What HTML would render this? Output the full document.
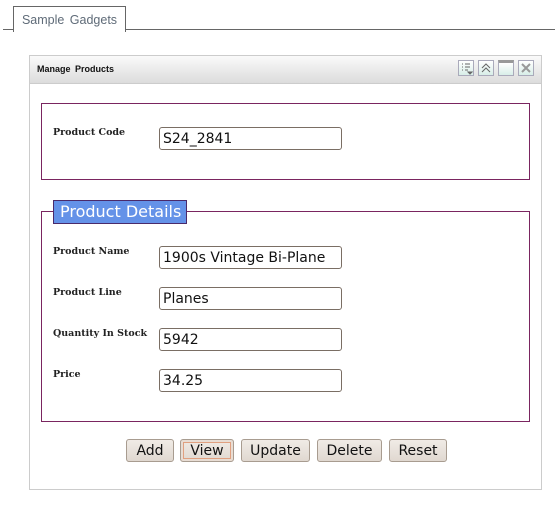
<!DOCTYPE html>
<html><head><style>
body{margin:0;width:555px;height:527px;background:#fff;position:relative;overflow:hidden;font-family:"Liberation Sans",sans-serif}
.a{position:absolute}
.lbl{position:absolute;left:53px;font-family:"DejaVu Serif",serif;font-weight:bold;font-size:9.5px;color:#222}
.inp{position:absolute;left:159px;border:1px solid #7a6e64;border-radius:3px;box-sizing:border-box;width:183px;height:23px;font-family:"DejaVu Sans",sans-serif;font-size:14px;color:#111;padding:3px 0 0 3px;line-height:17px}
.btn{position:absolute;top:439px;height:23px;box-sizing:border-box;border:1px solid #a89c90;border-radius:3px;background:linear-gradient(#f0ebe6,#e0d8d0);font-family:"DejaVu Sans",sans-serif;font-size:14px;color:#111;text-align:center;line-height:23px}
.ic{position:absolute;top:60px;width:16px;height:16px;box-sizing:border-box;border:1px solid #aab;background:linear-gradient(#fff,#d8eee8)}
.fs{position:absolute;box-sizing:border-box;border:1px solid #7a2560}
</style></head><body>
<div class="a" style="left:3px;top:29px;width:552px;height:1px;background:#666"></div>
<div class="a" style="left:13px;top:6px;width:113px;height:26px;box-sizing:border-box;border:1px solid #666;border-bottom:none;background:#fff;color:#5f6b78;font-size:12.5px;line-height:27px;text-align:center;word-spacing:2px">Sample Gadgets</div>

<div class="a" style="left:29px;top:55px;width:513px;height:435px;box-sizing:border-box;border:1px solid #ccc"></div>
<div class="a" style="left:30px;top:56px;width:511px;height:27px;background:linear-gradient(#fafafa,#dcdcdc);border-bottom:1px solid #ccc"></div>
<div class="a" style="left:37px;top:64px;font-size:9px;font-weight:bold;color:#111;word-spacing:2px">Manage Products</div>
<div class="ic" style="left:458px"><svg width="14" height="14"><path d="M3 3h1M3 6h1M3 9h1M6 3h5M6 6h5M6 9h3M9 11l2 2 2-2z" stroke="#666" fill="#666"/></svg></div>
<div class="ic" style="left:478px"><svg width="14" height="14"><path d="M3 7l4-4 4 4M3 11l4-4 4 4" stroke="#666" fill="none"/></svg></div>
<div class="ic" style="left:498px;border-top:3px solid #999"></div>
<div class="ic" style="left:518px"><svg width="14" height="14"><path d="M3 3l8 8M11 3l-8 8" stroke="#999" stroke-width="2"/></svg></div>

<div class="fs" style="left:41px;top:103px;width:489px;height:77px"></div>
<div class="lbl" style="top:127px">Product Code</div>
<div class="inp" style="top:127px">S24_2841</div>

<div class="fs" style="left:41px;top:211px;width:489px;height:211px"></div>
<div class="a" style="left:53px;top:200px;width:134px;height:24px;box-sizing:border-box;border:1px solid #4a2a6a;background:#6492e8;color:#fff;font-family:'DejaVu Sans',sans-serif;font-size:16px;line-height:22px;padding-left:6px">Product Details</div>
<div class="lbl" style="top:246px">Product Name</div>
<div class="inp" style="top:246px">1900s Vintage Bi-Plane</div>
<div class="lbl" style="top:287px">Product Line</div>
<div class="inp" style="top:287px">Planes</div>
<div class="lbl" style="top:328px">Quantity In Stock</div>
<div class="inp" style="top:328px">5942</div>
<div class="lbl" style="top:369px">Price</div>
<div class="inp" style="top:369px">34.25</div>

<div class="btn" style="left:126px;width:48px">Add</div>
<div class="btn" style="left:180px;width:54px;box-shadow:inset 0 0 0 2px #e8ddd4,inset 0 0 0 3px #e0a080">View</div>
<div class="btn" style="left:241px;width:69px">Update</div>
<div class="btn" style="left:317px;width:65px">Delete</div>
<div class="btn" style="left:389px;width:58px">Reset</div>
</body></html>
